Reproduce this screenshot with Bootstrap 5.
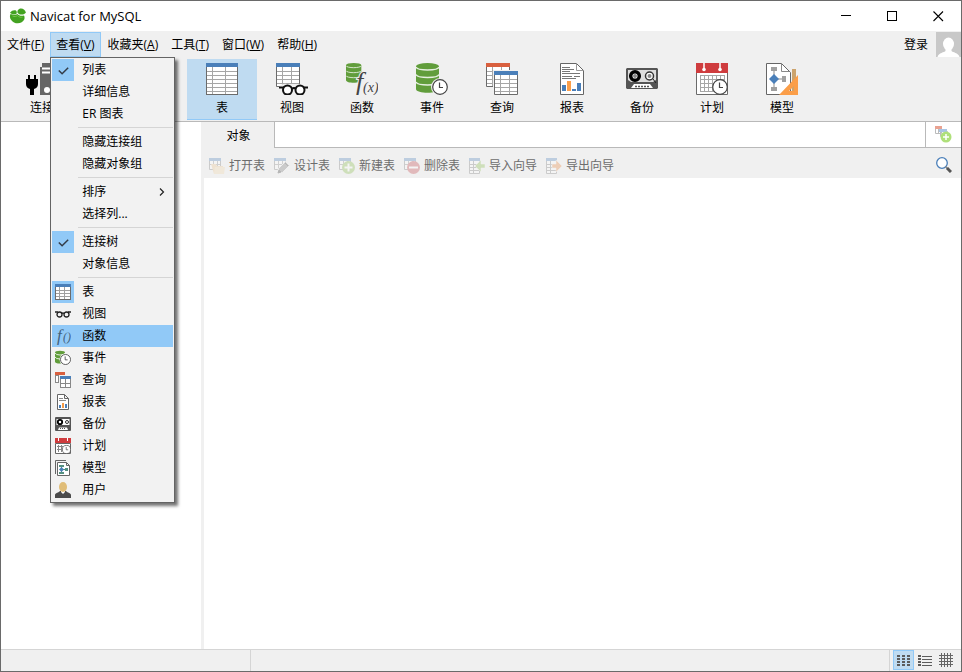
<!DOCTYPE html>
<html lang="zh-CN">
<head>
<meta charset="utf-8">
<meta name="viewport" content="width=device-width, initial-scale=1">
<title>Navicat for MySQL</title>
<link href="https://cdn.jsdelivr.net/npm/bootstrap@5.3.0/dist/css/bootstrap.min.css" rel="stylesheet">
<style>
:root{--chrome:#f0f0f0;--line:#b9b9b9;--soft:#d5d5d5;--pick:#bfdbf1;--hot:#91c9f7}
body{font-family:"Open Sans","Noto Sans CJK SC",sans-serif;font-size:12px;line-height:18px;color:#000}
button{color:inherit}
svg{display:block;flex:none}
.app-window{border:1px solid #6a6a6a;background:#fff}
.chrome{background:var(--chrome)}
.title-bar{height:30px;padding-left:8px}
.title-text{font-size:13px}
.win-btn{width:46px}
.plain-btn{border:0;background:none;padding:0}
.menu-strip{height:26px;padding-top:1px;gap:1px}
.menu-strip .menu-btn{height:25px;padding:0 6px;border:1px solid transparent;border-width:1px 0;background:none;white-space:nowrap}
.menu-strip .menu-btn.show{background:var(--pick);box-shadow:inset 1px 0 var(--hot),inset -1px 0 var(--hot);border-color:var(--hot)}
.view-drop{margin-left:-1px}
.avatar-btn{margin-top:-1px}
.ribbon{height:65px;padding:2px 6px 1px;border-bottom:1px solid var(--line)}
.ribbon-btn{width:70px;padding:4px 0 0;gap:4px;border:0;border-bottom:1px solid transparent;background:none}
.ribbon-btn.active{background:var(--pick);border-color:var(--hot)}
.ribbon-gap{width:110px}
.tree-pane{width:200px}
.splitter{width:3px}
.object-tabs{height:26px;margin-left:-3px}
.object-tab{width:73px;border:0;padding:1px 0 0 2px;background:var(--chrome)}
.tab-rest{border:solid var(--line);border-width:0 0 1px 1px}
.tab-add{width:36px;border:solid var(--line);border-width:0 0 1px 1px}
.object-tools{height:30px;padding:4px 9px 0 5px;gap:9px}
.tool-btn{gap:4px;color:#6d6d6d;border:0;padding:1px 0 0;background:none;white-space:nowrap}
.tool-btn svg{opacity:.3}
.status{height:22px;border-top:1px solid var(--soft)}
.status-first{width:250px;border-right:1px solid var(--soft)}
.status-views{padding:0 5px 0 3px;border-left:1px solid var(--soft)}
.view-btn{width:21px;height:20px;border:1px solid transparent;background:none;padding:0}
.view-btn.active{border-color:var(--hot);background:var(--pick)}
.view-menu{--bs-dropdown-font-size:12px;--bs-dropdown-min-width:125px;top:100%;left:0;padding:1px;color:#000;background:#f2f2f2;border:1px solid #646464;border-radius:0;box-shadow:3px 3px 3px rgba(0,0,0,.55)}
.view-menu .menu-line{height:22px;padding:0;border:0;color:#000;font-size:12px;line-height:18px;gap:8px}
.view-menu .menu-line:hover,.view-menu .menu-line.active{background:var(--hot)}
.pic-cell{width:22px;height:22px}
.pic-cell.ticked{background:var(--hot)}
.menu-rule{height:1px;margin:2px 0 3px 26px;background:var(--soft);border:0;opacity:1}
</style>
<script src="https://cdn.jsdelivr.net/npm/bootstrap@5.3.0/dist/js/bootstrap.bundle.min.js"></script>
</head>
<body>
<svg width="0" height="0" class="position-absolute" aria-hidden="true">
<defs>
<symbol id="tick" viewBox="0 0 16 16"><path d="M3 8l3.500 3.500L13 5" fill="none" stroke="#333c48" stroke-width="1.600"/></symbol>
<symbol id="clock" viewBox="0 0 16 16"><circle cx="8" cy="8" r="7.300" fill="#fff" stroke="#444" stroke-width="1.200"/><path d="M7.500 3.500v5H11" fill="none" stroke="#444" stroke-width="1.200"/></symbol>
<symbol id="drum" viewBox="0 0 24 30"><path d="M0 3v23c0 5 23 5 23 0V3" fill="#619d3b"/><ellipse cx="11.500" cy="3.200" rx="11.500" ry="3.200" fill="#619d3b"/><path d="M0 4c1 4 22 4 23 0M0 11.500c1 4 22 4 23 0M0 19c1 4 22 4 23 0" fill="none" stroke="#e5efdf" stroke-width="1.300"/></symbol>
<symbol id="sheet" viewBox="0 0 24 24"><path d="M.5 3.500h23v20H.5z" fill="#fff" stroke="#6b6b6b"/><path d="M1 8.500h22M1 12.500h22M1 16.500h22M1 20.500h22M6.500 4v19M15.500 4v19" stroke="#a6a6a6"/><path d="M0 0h24v4H0z" fill="currentColor"/></symbol>
<symbol id="minisheet" viewBox="0 0 16 16"><path d="M.5 3.500h11v9H.5z" fill="#fff" stroke="#777"/><path d="M1 7.500h10M4.500 4v8M8.500 4v8" stroke="#888"/><path d="M0 1h12v3H0z" fill="#4a7fb9"/></symbol>
</defs>
</svg>
<div class="app-window d-flex flex-column vh-100 overflow-hidden">
  <header class="title-bar d-flex align-items-stretch">
    <div class="d-flex align-items-center gap-1 flex-grow-1">
      <svg width="17" height="16" viewBox="0 0 17 16"><g fill="#43a221"><path d="M1.500 6C0 9 1.500 12.500 5 14.400c4 2 8.800.5 10.200-2.900.6-1.400.4-3-.2-4-3.200.6-5.200 0-6.600-1.600C6.800 7 4 7.200 1.500 6z"/><path d="M1 4.700C2.500 2.500 5 1.800 7 2.500c1 1 .9 2.500.3 3.400-1.800.9-4.500.4-6.300-1.200z"/><path d="M8.500 4.700C8 2 10 .5 12 .4c2.300.1 4.500 1.800 4.900 4.300-2.500 2.500-6.500 2.500-8.400 0z"/></g><path d="M3.500 8c2 1 4 .5 4.800-.5 1.700 1.700 3.500 2 5.200 1.600" fill="none" stroke="#72c545" stroke-width="1"/></svg>
      <span class="title-text">Navicat for MySQL</span>
    </div>
    <button class="plain-btn win-btn d-flex align-items-center justify-content-center" aria-label="最小化"><svg width="11" height="11" shape-rendering="crispEdges"><path d="M0 4.500h10" stroke="#000"/></svg></button>
    <button class="plain-btn win-btn d-flex align-items-center justify-content-center" aria-label="最大化"><svg width="11" height="11" shape-rendering="crispEdges"><path d="M.5.500h9v9h-9z" fill="none" stroke="#000"/></svg></button>
    <button class="plain-btn win-btn d-flex align-items-center justify-content-center" aria-label="关闭"><svg width="11" height="11"><path d="M.5.500l9.500 9.500M10 .5L.5 10" stroke="#000" stroke-width="1.100"/></svg></button>
  </header>

  <nav class="menu-strip chrome d-flex" aria-label="主菜单">
    <button class="menu-btn">文件(<u>F</u>)</button>
    <div class="view-drop dropdown">
      <button class="menu-btn show" aria-expanded="true">查看(<u>V</u>)</button>
      <div class="view-menu dropdown-menu show" role="menu">
        <button class="menu-line dropdown-item d-flex align-items-center" role="menuitem"><span class="pic-cell ticked p-1"><svg width="15" height="15"><use href="#tick"/></svg></span>列表</button>
        <button class="menu-line dropdown-item d-flex align-items-center" role="menuitem"><span class="pic-cell"></span>详细信息</button>
        <button class="menu-line dropdown-item d-flex align-items-center" role="menuitem"><span class="pic-cell"></span>ER 图表</button>
        <hr class="menu-rule">
        <button class="menu-line dropdown-item d-flex align-items-center" role="menuitem"><span class="pic-cell"></span>隐藏连接组</button>
        <button class="menu-line dropdown-item d-flex align-items-center" role="menuitem"><span class="pic-cell"></span>隐藏对象组</button>
        <hr class="menu-rule">
        <button class="menu-line dropdown-item d-flex align-items-center" role="menuitem"><span class="pic-cell"></span>排序<svg class="ms-auto me-2" width="6" height="8"><path d="M1 .5L4.500 4 1 7.500" fill="none" stroke="#222" stroke-width="1.200"/></svg></button>
        <button class="menu-line dropdown-item d-flex align-items-center" role="menuitem"><span class="pic-cell"></span>选择列...</button>
        <hr class="menu-rule">
        <button class="menu-line dropdown-item d-flex align-items-center" role="menuitem"><span class="pic-cell ticked p-1"><svg width="15" height="15"><use href="#tick"/></svg></span>连接树</button>
        <button class="menu-line dropdown-item d-flex align-items-center" role="menuitem"><span class="pic-cell"></span>对象信息</button>
        <hr class="menu-rule">
        <button class="menu-line dropdown-item d-flex align-items-center" role="menuitem"><span class="pic-cell ticked d-flex align-items-center justify-content-center"><svg width="16" height="16" shape-rendering="crispEdges"><path d="M.5.500h15v15H.5z" fill="#fff" stroke="#6b6b6b"/><path d="M1 6.500h14M1 9.500h14M1 12.500h14M4.500 3v12M9.500 3v12" stroke="#a0a0a0"/><path d="M0 0h16v3H0z" fill="#4a7fb9"/></svg></span>表</button>
        <button class="menu-line dropdown-item d-flex align-items-center" role="menuitem"><span class="pic-cell d-flex align-items-center justify-content-center"><svg width="16" height="8"><g fill="none" stroke="#222" stroke-width="1.300"><circle cx="4.500" cy="4.500" r="2.500"/><circle cx="11.500" cy="4.500" r="2.500"/><path d="M7 3.500q1-1 2 0M0 2h3M13 2h3"/></g></svg></span>视图</button>
        <button class="menu-line dropdown-item active d-flex align-items-center" role="menuitem"><span class="pic-cell d-flex align-items-center justify-content-center"><svg width="16" height="18" font-family="Liberation Serif" font-style="italic" fill="#42617c"><text x="2" y="14" font-size="17">f</text><text x="8" y="14" font-size="12">()</text></svg></span>函数</button>
        <button class="menu-line dropdown-item d-flex align-items-center" role="menuitem"><span class="pic-cell d-flex align-items-center justify-content-center"><svg width="16" height="16"><path d="M0 2.500v9q0 2 5 2h5v-11z" fill="#619d3b"/><ellipse cx="5" cy="2.500" rx="5" ry="1.700" fill="#619d3b"/><path d="M0 3q1 2 5 2t5-2M0 7q1 2 5 2" fill="none" stroke="#e5efdf"/><circle cx="10.500" cy="9.500" r="6" fill="#f2f2f2"/><use href="#clock" x="5" y="4" width="11" height="11"/></svg></span>事件</button>
        <button class="menu-line dropdown-item d-flex align-items-center" role="menuitem"><span class="pic-cell d-flex align-items-center justify-content-center"><svg width="16" height="16" shape-rendering="crispEdges"><path d="M.5 3.500h9v7h-9zM3.500 4v7" fill="#fff" stroke="#888"/><path d="M0 0h10v3H0z" fill="#d9603f"/><path d="M4 3h12v13H4z" fill="#f2f2f2"/><path d="M5.500 6.500h10v9h-10zM10.500 7v8M6 11.500h10" fill="#fff" stroke="#888"/><path d="M5 4h11v3H5z" fill="#4a7fb9"/></svg></span>查询</button>
        <button class="menu-line dropdown-item d-flex align-items-center" role="menuitem"><span class="pic-cell d-flex align-items-center justify-content-center"><svg width="16" height="16"><path d="M2.500.500h7l4 4v11h-11zM9.500.500v4h4" fill="#fff" stroke="#666"/><path d="M4 4.500h4M4 6.500h7" stroke="#888"/><path d="M4 11h2v3H4zM10 10h2v4h-2z" fill="#4a7fb9"/><path d="M7 9h2v5H7z" fill="#f39a48"/></svg></span>报表</button>
        <button class="menu-line dropdown-item d-flex align-items-center" role="menuitem"><span class="pic-cell d-flex align-items-center justify-content-center"><svg width="16" height="14"><rect width="16" height="14" rx="1" fill="#555"/><path d="M1.500 2h13v6h-13z" fill="#fff"/><circle cx="5" cy="5" r="2.200" fill="#fff" stroke="#000" stroke-width="1.800"/><circle cx="12" cy="5" r="1.500" fill="#fff" stroke="#333"/><path d="M4 10.500h8l1 2.500H3z" fill="#fff"/><path d="M5 11.500h6" stroke="#555" stroke-dasharray="1 1"/></svg></span>备份</button>
        <button class="menu-line dropdown-item d-flex align-items-center" role="menuitem"><span class="pic-cell d-flex align-items-center justify-content-center"><svg width="16" height="16"><path d="M.5 5.500h15v10H.5z" fill="#fff" stroke="#666"/><path d="M2 8.500h6M2 11.500h6M3.500 7v7M6.500 7v7" stroke="#888"/><path d="M0 0h16v5H0z" fill="#cf3c3e"/><path d="M3.500 0v3M12.500 0v3" stroke="#fff"/><use href="#clock" x="7" y="7" width="9" height="9"/></svg></span>计划</button>
        <button class="menu-line dropdown-item d-flex align-items-center" role="menuitem"><span class="pic-cell d-flex align-items-center justify-content-center"><svg width="16" height="16"><path d="M.5 14V.5H11" fill="none" stroke="#666"/><path d="M2.500 2.500h9l3 3v10h-12zM11.500 2.500v3h3" fill="#fff" stroke="#666"/><path d="M6.500 6v7M6 9.500h6" stroke="#4d897d"/><path d="M4 5h5v2H4zM4 12h5v2H4zM10 8h3v3h-3z" fill="#559080"/><path d="M6.500 7L9 9.500 6.500 12 4 9.500z" fill="#4a7fb9"/></svg></span>模型</button>
        <button class="menu-line dropdown-item d-flex align-items-center" role="menuitem"><span class="pic-cell d-flex align-items-center justify-content-center"><svg width="16" height="16"><path d="M0 16v-3c0-2 4-2.500 5-4h6c1 1.500 5 2 5 4v3z" fill="#4b4b4b"/><path d="M6 8h4v2l-2 2-2-2z" fill="#fff"/><ellipse cx="8" cy="5" rx="4" ry="5" fill="#e0bd78"/></svg></span>用户</button>
      </div>
    </div>
    <button class="menu-btn">收藏夹(<u>A</u>)</button>
    <button class="menu-btn">工具(<u>T</u>)</button>
    <button class="menu-btn">窗口(<u>W</u>)</button>
    <button class="menu-btn">帮助(<u>H</u>)</button>
    <div class="ms-auto d-flex gap-2">
      <button class="plain-btn">登录</button>
      <button class="plain-btn avatar-btn" aria-label="用户头像"><svg width="25" height="25"><path d="M0 0h25v25H0z" fill="#c8c8c8"/><ellipse cx="12.500" cy="12" rx="5.500" ry="6.500" fill="#fff"/><path d="M9.500 17h6v2c1 1.500 7 1.500 8 6h-22c1-4.500 7-4.500 8-6z" fill="#fff"/></svg></button>
    </div>
  </nav>

  <div class="ribbon chrome d-flex" role="toolbar" aria-label="对象类型">
    <button class="ribbon-btn d-flex flex-column align-items-center"><svg width="32" height="32"><path d="M16 0h16v32H14V4h2z" fill="#666"/><path d="M16 5.500h14M16 9.500h14" stroke="#fff" stroke-width="2"/><circle cx="21" cy="27" r="3" fill="#fff"/><path d="M0 16h12v5q0 4-4 5v6H4v-6q-4-1-4-5zM2 12h2v5H2zM8 12h2v5H8z"/></svg>连接</button>
    <div class="ribbon-gap"></div>
    <button class="ribbon-btn active d-flex flex-column align-items-center"><svg width="32" height="32" shape-rendering="crispEdges"><path d="M.5.500h31v31H.5z" fill="#fff" stroke="#6b6b6b"/><path d="M1 8.500h30M1 12.500h30M1 16.500h30M1 20.500h30M1 24.500h30M1 28.500h30M6.500 4v27M19.500 4v27" stroke="#a6a6a6"/><path d="M0 0h32v4H0z" fill="#4a7fb9"/></svg>表</button>
    <button class="ribbon-btn d-flex flex-column align-items-center"><svg width="32" height="32"><use href="#sheet" width="24" height="24" color="#4a7fb9"/><path d="M3 24q3-4 8-3h12q6-1 8 3v8H4z" fill="#f0f0f0"/><g stroke="#111" stroke-width="2"><circle cx="11.500" cy="27" r="4.500" fill="#fff"/><circle cx="24" cy="27" r="4.500" fill="#fff"/><path d="M16 26q2-2 4 0M3 24.500h5M27 24.500h5" fill="none"/></g></svg>视图</button>
    <button class="ribbon-btn d-flex flex-column align-items-center"><svg width="32" height="32" font-family="Liberation Serif" font-style="italic" fill="#444"><use href="#drum" width="16" height="20"/><g stroke="#f0f0f0" stroke-width="2" paint-order="stroke"><text x="10" y="27" font-size="26">f</text><text x="17" y="29" font-size="14">(x)</text></g></svg>函数</button>
    <button class="ribbon-btn d-flex flex-column align-items-center"><svg width="32" height="32"><use href="#drum" width="24" height="30"/><circle cx="24" cy="24" r="9" fill="#f0f0f0"/><use href="#clock" x="16" y="16" width="16" height="16"/></svg>事件</button>
    <button class="ribbon-btn d-flex flex-column align-items-center"><svg width="32" height="32"><use href="#sheet" width="24" height="24" color="#d9603f"/><path d="M7 7h25v25H7z" fill="#f0f0f0"/><use href="#sheet" x="8" y="8" width="24" height="24" color="#4a7fb9"/></svg>查询</button>
    <button class="ribbon-btn d-flex flex-column align-items-center"><svg width="32" height="32"><path d="M4.500.500h16l7 7v24h-23z" fill="#fff" stroke="#666"/><path d="M20.500.500v7h7" fill="none" stroke="#999"/><path d="M6 4.500h8M6 6.500h12M6 8.500h8M6 10.500h18M6 13.500h10M18 13.500h6M6 15.500h14" stroke="#777"/><path d="M6 22h4v6H6zM16 26h4v2h-4zM21 20h4v8h-4z" fill="#4a7fb9"/><path d="M11 18h4v10h-4z" fill="#fb9e49"/></svg>报表</button>
    <button class="ribbon-btn d-flex flex-column align-items-center"><svg width="32" height="32"><path d="M1 5h30l1 1v19l-1 1H1l-1-1V6z" fill="#555"/><path d="M2 7h28v10l-3 2H5l-3-2z" fill="#ddd"/><circle cx="9" cy="13" r="4.300" fill="#fff" stroke="#000" stroke-width="3.500"/><circle cx="9" cy="13" r="2" fill="#888"/><circle cx="23.500" cy="13" r="4" fill="#fff" stroke="#333" stroke-width="1.500"/><circle cx="23.500" cy="13" r="2" fill="#888"/><path d="M27 16l3 4" stroke="#222"/><path d="M8 21h16l3 4H5z" fill="#fff"/><path d="M9 23.500h14" stroke="#555" stroke-width="1.500" stroke-dasharray="2 1"/></svg>备份</button>
    <button class="ribbon-btn d-flex flex-column align-items-center"><svg width="32" height="32"><path d="M.5 8.500h31v23H.5z" fill="#fff" stroke="#6b6b6b"/><path d="M4 12.500h24M4 16.500h24M4 20.500h24M4 24.500h24M4 28.500h20M4.500 12v17M8.500 12v17M12.500 12v17M16.500 12v17M20.500 12v17M24.500 12v9M28.500 12v9" stroke="#a6a6a6"/><path d="M0 0h32v10H0z" fill="#cf3c3e"/><path d="M8 0v6M24 0v6" stroke="#fff" stroke-width="1.500"/><circle cx="8" cy="6.500" r="1.800" fill="#fff"/><circle cx="24" cy="6.500" r="1.800" fill="#fff"/><use href="#clock" x="16" y="16" width="16" height="16"/></svg>计划</button>
    <button class="ribbon-btn d-flex flex-column align-items-center"><svg width="32" height="32"><path d="M.5.500h15l9 9v22H.5z" fill="#fff" stroke="#666"/><path d="M15.500.500v8h8" fill="none" stroke="#888"/><path d="M8 6v20M8 16h12" stroke="#8b8b8b"/><path d="M5 4h6v4H5zM5 24h6v4H5zM16 13h4v6h-4z" fill="#a0a0a0"/><path d="M8 11l5 5-5 5-5-5z" fill="#4a7fb9"/><path d="M26 6h4v24h-4z" fill="#cca36c"/><path d="M32 12v20H13zM28 23l-5 5h5z" fill="#fb9e49" fill-rule="evenodd"/></svg>模型</button>
  </div>

  <div class="d-flex flex-grow-1">
    <aside class="tree-pane" aria-label="连接树"></aside>
    <div class="splitter chrome"></div>
    <main class="flex-grow-1 d-flex flex-column">
      <div class="object-tabs d-flex" role="tablist">
        <button class="object-tab" role="tab" aria-selected="true">对象</button>
        <div class="tab-rest flex-grow-1"></div>
        <button class="tab-add bg-white d-flex align-items-center justify-content-center p-0" aria-label="新建对象"><svg width="17" height="17"><path d="M.5 2.500h6v5h-6zM3.500 3v5M5.500 5.500h7v5h-7z" fill="none" stroke="#bbb"/><path d="M0 0h7v3H0z" fill="#e9a291"/><path d="M4 3h8v3H4z" fill="#a9c5e4"/><circle cx="11" cy="11" r="5.500" fill="#afe07a"/><path d="M8 11h6M11 8v6" stroke="#fff" stroke-width="1.500"/></svg></button>
      </div>
      <div class="object-tools chrome d-flex align-items-center" role="toolbar" aria-label="表操作">
        <button class="tool-btn d-flex align-items-center" disabled><svg width="16" height="16"><use href="#minisheet" width="16" height="16" y="-1"/><path d="M2 6h5l1 2h6v8H5z" fill="#ecc58c"/><path d="M6 9h10l-1 7H5z" fill="#f3d8a9"/></svg>打开表</button>
        <button class="tool-btn d-flex align-items-center" disabled><svg width="16" height="16"><use href="#minisheet" width="16" height="16" y="-1"/><path d="M3.500 15.500l1-5 7-7 4 4-7 7z" fill="#777" stroke="#f0f0f0"/><path d="M4 15l1-3 2 2zM11 5l3 3" stroke="#333" fill="#333"/></svg>设计表</button>
        <button class="tool-btn d-flex align-items-center" disabled><svg width="16" height="16"><use href="#minisheet" width="16" height="16" y="-1"/><circle cx="9.500" cy="9.500" r="6.500" fill="#82b941"/><path d="M5.500 9.500h8M9.500 5.500v8" stroke="#fff" stroke-width="2"/></svg>新建表</button>
        <button class="tool-btn d-flex align-items-center" disabled><svg width="16" height="16"><use href="#minisheet" width="16" height="16" y="-1"/><circle cx="9.500" cy="9.500" r="6.500" fill="#c13e43"/><path d="M5 9.500h9" stroke="#fff" stroke-width="2"/></svg>删除表</button>
        <button class="tool-btn d-flex align-items-center" disabled><svg width="16" height="16"><path d="M.5 2.500h10v13H.5zM4.500 3v13M1 6.500h9M1 9.500h9M1 12.500h9" fill="#fff" stroke="#777"/><path d="M0 0h11v3H0z" fill="#4a7fb9"/><path d="M16 6v4h-4v4L6 8l6-6v4z" fill="#82b941" stroke="#f0f0f0" stroke-width=".5"/></svg>导入向导</button>
        <button class="tool-btn d-flex align-items-center" disabled><svg width="16" height="16"><path d="M.5 2.500h10v13H.5zM4.500 3v13M1 6.500h9M1 9.500h9M1 12.500h9" fill="#fff" stroke="#777"/><path d="M0 0h11v3H0z" fill="#4a7fb9"/><path d="M6 6v4h4v4l6-6-6-6v4z" fill="#e88336" stroke="#f0f0f0" stroke-width=".5"/></svg>导出向导</button>
        <button class="plain-btn ms-auto" aria-label="搜索"><svg width="16" height="16"><circle cx="6" cy="6" r="5.300" fill="#fff" stroke="#4a7fb9" stroke-width="1.300"/><path d="M9.500 9.500l2 2" stroke="#888" stroke-width="1.500"/><path d="M11 11l4 4" stroke="#555" stroke-width="3"/></svg></button>
      </div>
    </main>
  </div>

  <footer class="status chrome d-flex">
    <div class="status-first"></div>
    <div class="status-views d-flex ms-auto" role="group" aria-label="视图模式">
      <button class="view-btn active d-flex align-items-center justify-content-center" aria-label="列表"><svg width="13" height="11" shape-rendering="crispEdges"><path d="M0 1h13M0 4h13M0 7h13M0 10h13" stroke="#5c5c5c" stroke-width="2" stroke-dasharray="3 2"/></svg></button>
      <button class="view-btn d-flex align-items-center justify-content-center" aria-label="详细信息"><svg width="14" height="11" shape-rendering="crispEdges"><path d="M0 1h3M0 4h3M0 7h3M0 10h3" stroke="#5c5c5c" stroke-width="2"/><path d="M4 1.500h10M4 4.500h10M4 7.500h10M4 10.500h10" stroke="#5c5c5c"/></svg></button>
      <button class="view-btn d-flex align-items-center justify-content-center" aria-label="ER 图表"><svg width="14" height="14" shape-rendering="crispEdges"><path d="M0 2.500h14M0 5.500h14M0 8.500h14M0 11.500h14M2.500 0v14M5.500 0v14M8.500 0v14M11.500 0v14" stroke="#666"/></svg></button>
    </div>
  </footer>
</div>
</body>
</html>
